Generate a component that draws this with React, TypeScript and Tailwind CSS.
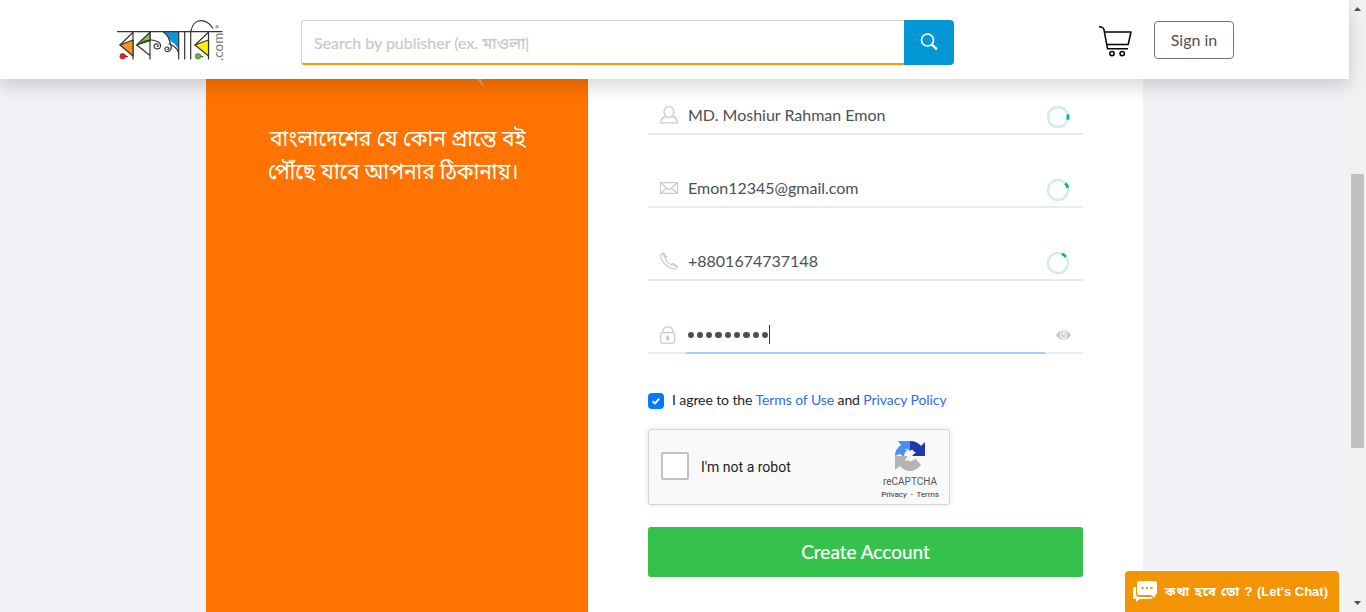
import type { ReactNode } from 'react';

const Logo = () => (
  <svg className="h-[48px] w-[112px]" viewBox="0 0 112 48" fill="none" stroke="#333" strokeWidth="1.200" strokeLinejoin="round" strokeLinecap="round">
    <path d="M47.700 17H63.700V35.500C62 31 60 28.500 56.500 27 53.500 24 51.500 19.500 47.700 17z" fill="#0b97d8" stroke="none" />
    <path d="M5 30L18 17.300V44" />
    <path d="M5 30L18 25V41z" fill="#f7941d" />
    <path d="M35 17v27M21.700 30L35 40.500" />
    <path d="M21.700 30L35 17.300v8.500z" fill="#8cc63f" />
    <path d="M26 28c5-3 11-3.500 15-2 4 1.300 5 3 4.500 5.500-.6 3-5 3.300-6.200.8-1-2.300 1-3.800 2.700-3.300 1.800.6 1.500 2.500.2 2.500" />
    <path d="M49 17.500c5 2.500 5.500 8.500 7 13.500 1.500 5-5 7.500-6 3.800-.6-2.500 2.300-3.600 3.700-2 .8 1-.3 2-1 1.500M54 29c4 1 9 4.500 9.700 9M63.700 17v27M69.700 17v27M75.700 16v28" />
    <path d="M76 16C77 9.500 81 5.700 86 5.700S95 9 97.700 13" />
    <path d="M80 30L93.500 17.300V44" />
    <path d="M80 30L93.500 25V41z" fill="#fff200" />
    <path d="M2.500 16.600H107" />
    <circle cx="7.700" cy="41.300" r="2.800" fill="#e41e26" stroke="#a33" strokeWidth=".8" />
    <path d="M10.500 41l2 .8M85.800 41l2 .8" />
    <circle cx="83" cy="41.300" r="2.800" fill="#6fb52c" stroke="#485" strokeWidth=".8" />
    <circle cx="102" cy="11.700" r="1.300" fill="#bbb" stroke="#999" strokeWidth=".8" />
  </svg>
);

const UserIcon = () => (
  <svg width="18" height="18" viewBox="0 0 18 18" fill="none" stroke="#c9cccc" strokeWidth="1.300">
    <ellipse cx="9" cy="6" rx="5" ry="5.300" />
    <path d="M6 10.500C2.500 11.200.7 13 .7 16.800h16.600c0-3.800-1.800-5.600-5.300-6.300" />
  </svg>
);
const MailIcon = () => (
  <svg width="18" height="18" viewBox="0 0 18 18" fill="none" stroke="#c9cccc" strokeWidth="1.100">
    <path d="M.6 3.600h16.800v10.800H.6zM1 4l6.500 6q1.500 1.300 3 0L17 4M1 14l5.700-5M17 14l-5.700-5" />
  </svg>
);
const PhoneIcon = () => (
  <svg width="18" height="18" viewBox="0 0 18 18" fill="none" stroke="#c9cccc" strokeWidth="1.200" strokeLinejoin="round">
    <path d="M1.500 1.800L3.400.8l3.100 4.300-1.300 1.500c.8 2.200 3.500 5 6.200 6l1.600-1.200 4.400 3-.8 1.800c-1 .8-2.600 1-4.400.4C6.800 14.800 2.500 10.200 1 5.500.5 3.800.6 2.600 1.500 1.800z" />
    <path d="M2.500 1.700l3 4.200M12.200 12.100l4.400 3" />
  </svg>
);
const LockIcon = () => (
  <svg width="16" height="18" viewBox="0 0 16 18" fill="none" stroke="#c9cccc" strokeWidth="1.300">
    <rect x=".7" y="6.700" width="14" height="10.500" rx="1.800" />
    <path d="M3 6.500V5.300C3 2.500 5 .8 7.800.8s4.900 1.700 4.900 4.500v1.200" />
    <rect x="6.700" y="10" width="2" height="4" rx="1" fill="#c9cccc" />
  </svg>
);

const Spinner = ({ d }: { d: string }) => (
  <svg width="24" height="24" viewBox="0 0 24 24" fill="none" strokeWidth="2.400">
    <circle cx="12" cy="12" r="10" stroke="#cfefe3" />
    <path d={d} stroke="#0fb57a" strokeWidth="2.800" />
  </svg>
);

const Field = ({ icon, text, spin }: { icon: ReactNode; text: string; spin: string }) => (
  <div className="mb-9 flex h-[37px] items-center border-b-2 border-[#e9ebeb]">
    <span className="mb-[2px] ml-3 w-7 shrink-0">{icon}</span>
    <span className="mb-[2px] flex-1 text-[16px] leading-6 text-[#495057]">{text}</span>
    <span className="mr-[13px] mt-[3px]"><Spinner d={spin} /></span>
  </div>
);

export default function App() {
  return (
    <div className="flex h-[612px] w-[1366px] overflow-hidden bg-[#f0f2f5] font-['Lato','Noto_Sans_Bengali',sans-serif]">
      <div className="relative flex w-[1349px] shrink-0 flex-col">
        <header className="relative z-10 flex h-[79px] shrink-0 bg-white shadow-[0_8px_16px_rgba(0,0,0,0.15)]">
          <div className="relative ml-[115px] mt-[15px] h-[48px] w-[112px]">
            <Logo />
            <span className="absolute left-[95px] top-[14px] h-[32px] w-[16px] rotate-180 text-[13.500px] leading-[16px] text-[#777] [writing-mode:vertical-rl]">.com</span>
          </div>
          <div className="ml-[74px] mt-5 flex h-[45px] w-[653px]">
            <div className="flex flex-1 items-center rounded-l-[3px] border border-r-0 border-b-2 border-[#ced4da] border-b-[#ff9900] pl-3 pt-[2px] text-[16px] text-[#c9c9c9] [-webkit-text-stroke:0.2px_#c9c9c9]">
              <span>Search by publisher (ex. <span className="text-[16.500px]">মাওলা</span>|</span>
            </div>
            <div className="flex w-[50px] items-center justify-center rounded-r-[4px] bg-[#0397d6] pb-[2px]">
              <svg width="18" height="18" viewBox="0 0 18 18" fill="none" stroke="white" strokeWidth="1.700">
                <circle cx="7.500" cy="7" r="6" />
                <path d="M11.700 11.300l5.200 5" strokeWidth="2.400" />
              </svg>
            </div>
          </div>
          <svg className="ml-[144px] mt-[25px] h-[34px] w-[36px]" viewBox="0 0 36 34" fill="none" stroke="black" strokeWidth="1.500" strokeLinejoin="round">
            <path d="M1 1.800c3 0 4.500.8 5 3L9.500 23.700h20.500M6 7h27l-2.800 12.500H9" />
            <circle cx="14" cy="28.600" r="2.200" />
            <circle cx="24.200" cy="28.600" r="2.200" />
          </svg>
          <button className="ml-5 mt-[21px] h-[38px] w-20 rounded-[4px] border border-[#6c757d] text-[16px] text-[#505050]">Sign in</button>
        </header>

        <main className="ml-[206px] flex w-[937px] flex-1 bg-white">
          <section className="relative w-[382px] shrink-0 bg-[#ff7400] pt-[42px] text-[22px] leading-[33px] text-white">
            <svg className="absolute left-[271px] top-0 h-[9px] w-2" viewBox="0 0 8 9"><path d="M0 0h4l3 9z" fill="#f7a15a" /></svg>
            <p className="ml-[64px] origin-left scale-x-[0.958] whitespace-nowrap">বাংলাদেশের যে কোন প্রান্তে বই</p>
            <p className="ml-[62px] origin-left scale-x-[0.950] whitespace-nowrap">পৌঁছে যাবে আপনার ঠিকানায়।</p>
          </section>
          <section className="ml-[60px] w-[435px] pt-[19px]">
            <Field icon={<UserIcon />} text="MD. Moshiur Rahman Emon" spin="M21.700 9.400a10 10 0 0 1 0 5.200" />
            <Field icon={<MailIcon />} text="Emon12345@gmail.com" spin="M19.300 5.200a10 10 0 0 1 2.500 4.700" />
            <Field icon={<PhoneIcon />} text="+8801674737148" spin="M15.800 2.800a10 10 0 0 1 4 3" />
            <div className="flex h-[37px]">
              <div className="flex w-[38px] items-center border-b-2 border-[#e9ebeb] pl-[11.500px]"><LockIcon /></div>
              <div className="flex w-[359px] items-center border-b-2 border-[#a8cdfb] text-[#495057]">
                <span className="flex w-[83px] gap-[3.130px] pl-[1.500px] pt-px">
                  {Array.from({ length: 9 }, (_, i) => <i key={i} className="size-[6.200px] shrink-0 rounded-full bg-[#495057]" />)}
                </span>
                <span className="mb-px h-[19px] w-px bg-[#333]" />
              </div>
              <div className="flex w-[38px] items-center border-b-2 border-[#e9ebeb] pl-[11px]">
                <svg width="15" height="10" viewBox="0 0 15 10">
                  <path d="M0 5Q3 .5 7.500.5T15 5Q12 9.500 7.500 9.500T0 5z" fill="#c6c6c6" />
                  <circle cx="7.500" cy="5" r="3" fill="none" stroke="white" strokeWidth="1.200" />
                  <path d="M7.500 2.800V5H9" stroke="white" strokeWidth="1" fill="none" />
                </svg>
              </div>
            </div>
            <div className="mt-[35px] flex h-5 items-center text-[14px] tracking-[-0.090px] text-[#212529]">
              <span className="mr-2 mt-[4px] flex size-4 items-center justify-center rounded-[4px] bg-[#007bff]">
                <svg width="8" height="8" viewBox="0 0 8 8"><path d="M.7 4.200L3 6.400 7.300 1.700" fill="none" stroke="white" strokeWidth="1.900" /></svg>
              </span>
              <span className="whitespace-nowrap">I agree to the <a className="text-[#2a6df4]">Terms of Use</a> and <a className="text-[#2a6df4]">Privacy Policy</a></span>
            </div>
            <div className="mt-[20px] flex h-[76px] w-[302px] items-center rounded-[3px] border border-[#d3d3d3] bg-[#f9f9f9] font-['Roboto',sans-serif] shadow-[0_0_4px_1px_rgba(0,0,0,0.08)]">
              <span className="ml-3 mt-[-2px] size-7 rounded-[2px] border-2 border-[#c1c1c1] bg-white" />
              <span className="ml-3 flex-1 text-[14px] text-[#222]">I'm not a robot</span>
              <div className="mr-[7px] flex w-[64px] flex-col items-center self-start pt-[10px] text-[#555]">
                <svg width="32" height="32" viewBox="0 0 32 32">
                  <path d="M16 1H4l3 4Q1 9 1 16l5-2 4 3q0-5 3-6l-2-2q3-.5 5 2z" fill="#4a90f4" />
                  <path d="M16 1q7 0 11 5l4-4v14H18l4-4q-3 0-3-2-1-1-3 1z" fill="#1c3aa9" />
                  <path d="M1 16h13l-3 4q1 1 4 0 1 3 4 0 2 1 2-2l6 7q-5 6-11 6-6 0-10-5l-5 4z" fill="#b4b4b4" />
                </svg>
                <span className="mt-[4px] text-[10px] leading-[12px]">reCAPTCHA</span>
                <span className="mt-[2px] whitespace-nowrap text-[8px] leading-[10px] tracking-[-0.050px] text-[#333]">Privacy&nbsp; - &nbsp;Terms</span>
              </div>
            </div>
            <button className="mt-[22px] h-[50px] w-full rounded-[3px] bg-[#34c24d] text-[19px] text-white [-webkit-text-stroke:0.2px_white]">Create Account</button>
          </section>
        </main>

        <div className="absolute bottom-0 right-[10px] z-20 flex h-[41px] w-[214px] items-center rounded-t-[4px] bg-[#f39404] pl-2 font-['Liberation_Sans','Noto_Sans_Bengali',sans-serif] text-[13px] font-bold text-white">
          <svg width="24" height="21" viewBox="0 0 24 21">
            <path d="M2 6Q0 6 0 8v8q0 2 2 2h1v3l4-3h10q2 0 3-2H6q-3 0-3-3V6z" fill="white" />
            <path d="M6 0h15q3 0 3 3v9q0 2-2 2v3l-4-3H6q-2 0-2-2V2q0-2 2-2z" fill="white" />
            <g fill="#f39404"><circle cx="9.500" cy="7" r="1.200" /><circle cx="14" cy="7" r="1.200" /><circle cx="18.500" cy="7" r="1.200" /></g>
          </svg>
          <span className="ml-2 whitespace-nowrap"><span className="text-[13px] tracking-[0.900px]">কথা হবে তো ?</span> (Let's Chat)</span>
        </div>
      </div>
      <div className="flex w-[17px] flex-col items-center bg-[#f1f1f1]">
        <svg className="mt-[7px]" width="7" height="4"><path d="M0 4h7L3.500 0z" fill="#505050" /></svg>
        <div className="mt-[163px] h-[274px] w-[13px] bg-[#c1c1c1]" />
        <svg className="mb-[7px] mt-auto" width="7" height="4"><path d="M0 0h7L3.500 4z" fill="#505050" /></svg>
      </div>
    </div>
  );
}
